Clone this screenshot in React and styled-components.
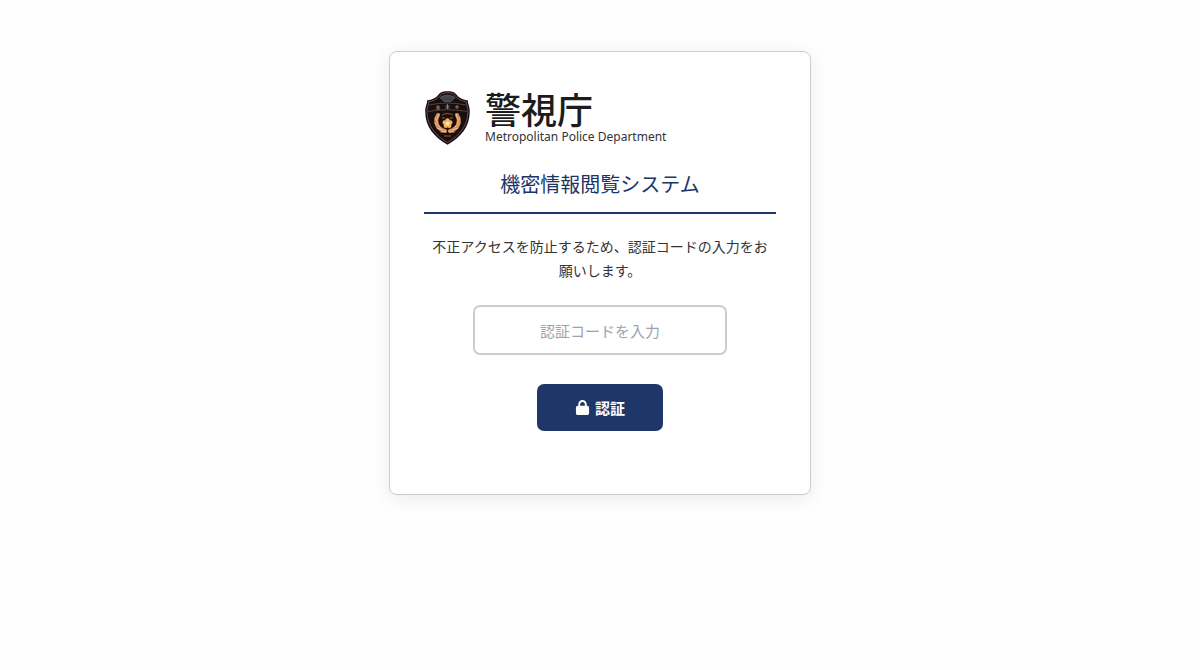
import React, { useState } from "react";
import styled, { createGlobalStyle } from "styled-components";
import { FaLock } from "react-icons/fa6";

const GlobalStyle = createGlobalStyle`
  * { box-sizing: border-box; }
  body {
    margin: 0;
    background: #fefefe;
    color: #333;
    font-family: "Noto Sans CJK JP", sans-serif;
  }
`;

const Page = styled.main`
  display: flex;
  justify-content: center;
  padding: 51px 16px;
`;

const Card = styled.section`
  width: 100%;
  max-width: 422px;
  padding: 34px 34px 63px;
  background: #fff;
  border: 1px solid #ccc;
  border-radius: 8px;
  box-shadow: 0 4px 20px rgba(0, 0, 0, 0.08);
`;

const Brand = styled.div`
  display: flex;
  align-items: center;
  gap: 15px;
  height: 64px;
  padding-left: 1px;
`;

const Emblem = styled.svg`
  width: 45px;
  height: 54px;
  flex: none;
`;

const BrandText = styled.div`
  display: flex;
  flex-direction: column;
  gap: 2px;
  color: #1c1c1c;
`;

const BrandName = styled.span`
  font-size: 36px;
  font-weight: 500;
  line-height: 36px;
`;

const BrandSub = styled.span`
  font-family: "Noto Sans", sans-serif;
  font-size: 12px;
  line-height: 18px;
  color: #333;
  white-space: nowrap;
`;

const Title = styled.h1`
  margin: 17px 0 20px;
  padding-bottom: 11px;
  border-bottom: 2px solid #1c3566;
  color: #1c3566;
  font-size: 20px;
  font-weight: 400;
  line-height: 34px;
  text-align: center;
`;

const Form = styled.form`
  display: flex;
  flex-direction: column;
  align-items: center;
`;

const Message = styled.label`
  padding: 0 4px;
  font-size: 14px;
  line-height: 24px;
  text-align: center;
`;

const CodeInput = styled.input`
  width: 72%;
  height: 50px;
  margin: 23px 0 29px;
  padding: 0 12px;
  border: 2px solid #ccc;
  border-radius: 7px;
  background: #fff;
  color: #333;
  font: inherit;
  font-size: 15px;
  text-align: center;
  &::placeholder { color: #9ca3af; opacity: 1; }
`;

const SubmitButton = styled.button`
  display: flex;
  align-items: center;
  gap: 5px;
  height: 47px;
  padding: 0 38px;
  border: 0;
  border-radius: 7px;
  background: #1e3668;
  color: #fff;
  font: inherit;
  font-size: 15px;
  font-weight: 700;
  cursor: pointer;
`;

function Crest() {
  return (
    <Emblem viewBox="0 0 45 54" role="img" aria-label="警視庁">
      <path d="M22.5 0.3C26 0.3 29 0.8 31 3C34 7 38 9 43 9.5C42.4 12 44.8 15 44.8 20C44.8 36 36 46 22.5 53.7C9 46 0.2 36 0.2 20C0.2 15 2.6 12 2 9.5C7 9 11 7 14 3C16 0.8 19 0.3 22.5 0.3Z" fill="#171012" />
      <path d="M22.5 1.8C26 1.8 28 2.2 30 4.5C33 8.3 37 10.3 41.4 10.8C41 13 43 16 43 20C43 35 34.5 44.5 22.5 51.5C10.5 44.5 2 35 2 20C2 16 4 13 3.6 10.8C8 10.3 12 8.3 15 4.5C17 2.2 19 1.8 22.5 1.8Z" fill="none" stroke="#8c5849" strokeWidth="0.8" />
      <path d="M15 6.5Q22.5 2 30 6.5L26 10.5H19Z" fill="#45424a" stroke="#777079" strokeWidth="0.6" />
      <path d="M4 14Q22.5 10 41 14M3 20.5Q22.5 17 42 20.5" fill="none" stroke="#715047" strokeWidth="0.7" />
      <path d="M11 16h4M13 14v4M11 18h4M20.5 15h4M20.5 17h4M22.5 13v5M30 16h4M32 14v4" fill="none" stroke="#b98a75" strokeWidth="0.8" />
      <g fill="none" stroke="#d8874e" strokeWidth="4" strokeLinecap="round">
        <path d="M13 24C9 31 12 38 20 40" />
        <path d="M32 24C36 31 33 38 25 40" />
      </g>
      <g fill="none" stroke="#f2c296" strokeWidth="1" strokeLinecap="round">
        <path d="M14 23L12 28M10 27L13 32M10 32L15 36M12 37L18 39M16 41L21 40" />
        <path d="M31 23L33 28M35 27L32 32M35 32L30 36M33 37L27 39M29 41L24 40" />
      </g>
      <path d="M17 24Q22.5 21 28 24M17 27H20M25 27H28" fill="none" stroke="#75442e" strokeWidth="1.3" />
      <g fill="#f3b45c">
        <circle cx="22.5" cy="29.4" r="2.2" />
        <circle cx="25.3" cy="31.5" r="2.2" />
        <circle cx="24.2" cy="34.7" r="2.2" />
        <circle cx="20.8" cy="34.7" r="2.2" />
        <circle cx="19.7" cy="31.5" r="2.2" />
      </g>
      <circle cx="22.5" cy="32.4" r="2" fill="#ffe6ae" />
      <path d="M19 45H26" stroke="#8c402b" strokeWidth="1.3" />
    </Emblem>
  );
}

export default function App() {
  const [code, setCode] = useState("");
  return (
    <>
      <GlobalStyle />
      <Page>
        <Card>
          <Brand>
            <Crest />
            <BrandText>
              <BrandName>警視庁</BrandName>
              <BrandSub>Metropolitan Police Department</BrandSub>
            </BrandText>
          </Brand>
          <Title>機密情報閲覧システム</Title>
          <Form onSubmit={(event) => event.preventDefault()}>
            <Message htmlFor="code">
              不正アクセスを防止するため、認証コードの入力をお願いします。
            </Message>
            <CodeInput
              id="code"
              type="text"
              placeholder="認証コードを入力"
              value={code}
              onChange={(event) => setCode(event.target.value)}
            />
            <SubmitButton type="submit">
              <FaLock aria-hidden="true" />
              認証
            </SubmitButton>
          </Form>
        </Card>
      </Page>
    </>
  );
}
